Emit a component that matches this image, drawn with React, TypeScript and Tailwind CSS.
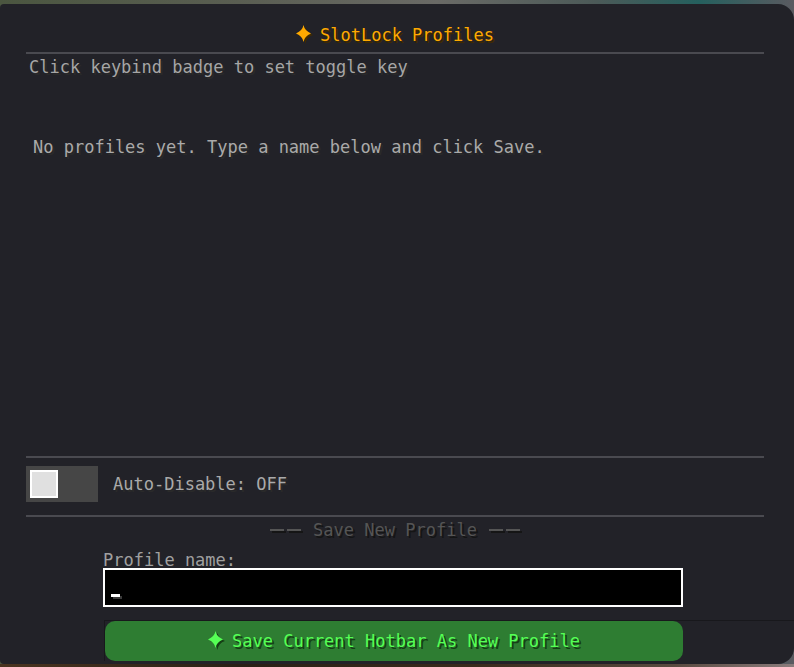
const mc = "font-['DejaVu_Sans_Mono','Liberation_Mono',monospace] text-[17px] leading-[20px] whitespace-pre";

// four-point sparkle used in the title and the save button
const Sparkle = ({ fill, shade }: { fill: string; shade: string }) => (
  <svg width="18" height="19" viewBox="0 0 18 19" className="mr-[6px] inline-block align-[-3px]">
    <path d="M9.5 2 Q10.5 7 17 10 Q10.5 12 9.5 19 Q8.5 12 2 10 Q8.5 7 9.5 2 Z" fill={shade} />
    <path d="M7.5 0 Q8.5 5.5 15 8.5 Q8.5 11 7.5 17 Q6.5 11 0 8.5 Q6.5 5.5 7.5 0 Z" fill={fill} />
  </svg>
);

const Divider = ({ className = '' }: { className?: string }) => (
  <div className={`h-[2px] bg-[#4a4a50] ${className}`} />
);

// the long double-bar dash either side of the section heading
const Dashes = () => (
  <span className="inline-flex gap-[3px] align-middle">
    <span className="h-[2px] w-[14px] bg-[#555555] shadow-[2px_2px_0_#151515]" />
    <span className="h-[2px] w-[14px] bg-[#555555] shadow-[2px_2px_0_#151515]" />
  </span>
);

const ProfileList = () => (
  <div className="h-[402px] pt-[3px]">
    <div className={`${mc} ml-[3px] text-[#a6a6a6] [text-shadow:2px_2px_0_#2a2a2a]`}>
      Click keybind badge to set toggle key
    </div>
    <div className={`${mc} mt-[60px] ml-[7px] text-[#aaaaaa] [text-shadow:2px_2px_0_#2a2a2a]`}>
      No profiles yet. Type a name below and click Save.
    </div>
  </div>
);

const AutoDisableToggle = ({ enabled }: { enabled: boolean }) => (
  <div className="mt-[8px] flex h-[36px] items-center gap-[15px]">
    <div className="flex h-[36px] w-[72px] items-center bg-[#464646] px-[4px]">
      <div className="h-[28px] w-[28px] border-2 border-white bg-[#e0e0e0]" />
    </div>
    <span className={`${mc} text-[#aaaaaa] [text-shadow:2px_2px_0_#2a2a2a]`}>
      Auto-Disable: {enabled ? 'ON' : 'OFF'}
    </span>
  </div>
);

export default function App() {
  return (
    <div className="flex h-[667px] w-[794px] flex-col overflow-hidden bg-[linear-gradient(90deg,#4b5640_0%,#5a5e52_30%,#6a6a66_55%,#4c5a58_75%,#25605e_88%,#5a5a60_100%)]">
      <div className="h-[4px] shrink-0" />
      <div className="relative flex h-[660px] shrink-0 flex-col overflow-hidden rounded-tl-[4px] rounded-tr-[16px] rounded-br-[16px] rounded-bl-[4px] bg-[#222228] pl-[26px] pr-[30px] pt-[21px]">
        <div className={`${mc} h-[20px] text-center text-[#ffaa00] [text-shadow:2px_2px_0_#3f2a00]`}>
          <Sparkle fill="#ffaa00" shade="#3f2a00" />
          SlotLock Profiles
        </div>
        <Divider className="mt-[7px]" />
        <ProfileList />
        <Divider />
        <AutoDisableToggle enabled={false} />
        <Divider className="mt-[13px]" />
        <div className={`${mc} mt-[3px] flex h-[20px] items-center justify-center gap-[12px] text-[#555555] [text-shadow:2px_2px_0_#151515]`}>
          <Dashes />
          <span>Save New Profile</span>
          <Dashes />
        </div>

        <div className="ml-[77px] mt-[10px] w-[580px]">
          <div className={`${mc} h-[18px] text-[#a0a0a0]`}>Profile name:</div>
          <div className="relative z-10 flex h-[39px] items-end border-2 border-white bg-black px-[6px] pb-[8px]">
            <div className="h-[3px] w-[9px] bg-white shadow-[2px_2px_0_#3a3a3a]" />
          </div>
        </div>

        <div className="-mr-[30px] ml-[78px] mt-[13px] border-l border-t border-[#18181c]">
          <button className="flex h-[40px] w-[578px] items-center justify-center rounded-[10px] bg-[#2e7d32]">
            <span className={`${mc} h-[20px] text-[#55ff55] [text-shadow:2px_2px_0_#153f15]`}>
              <Sparkle fill="#55ff55" shade="#153f15" />
              Save Current Hotbar As New Profile
            </span>
          </button>
        </div>
      </div>
      <div className="h-[3px] shrink-0 bg-[linear-gradient(90deg,#4a3420_0%,#2a2016_30%,#3a2a1c_60%,#5a4a40_85%,#8a7c7c_100%)]" />
    </div>
  );
}
